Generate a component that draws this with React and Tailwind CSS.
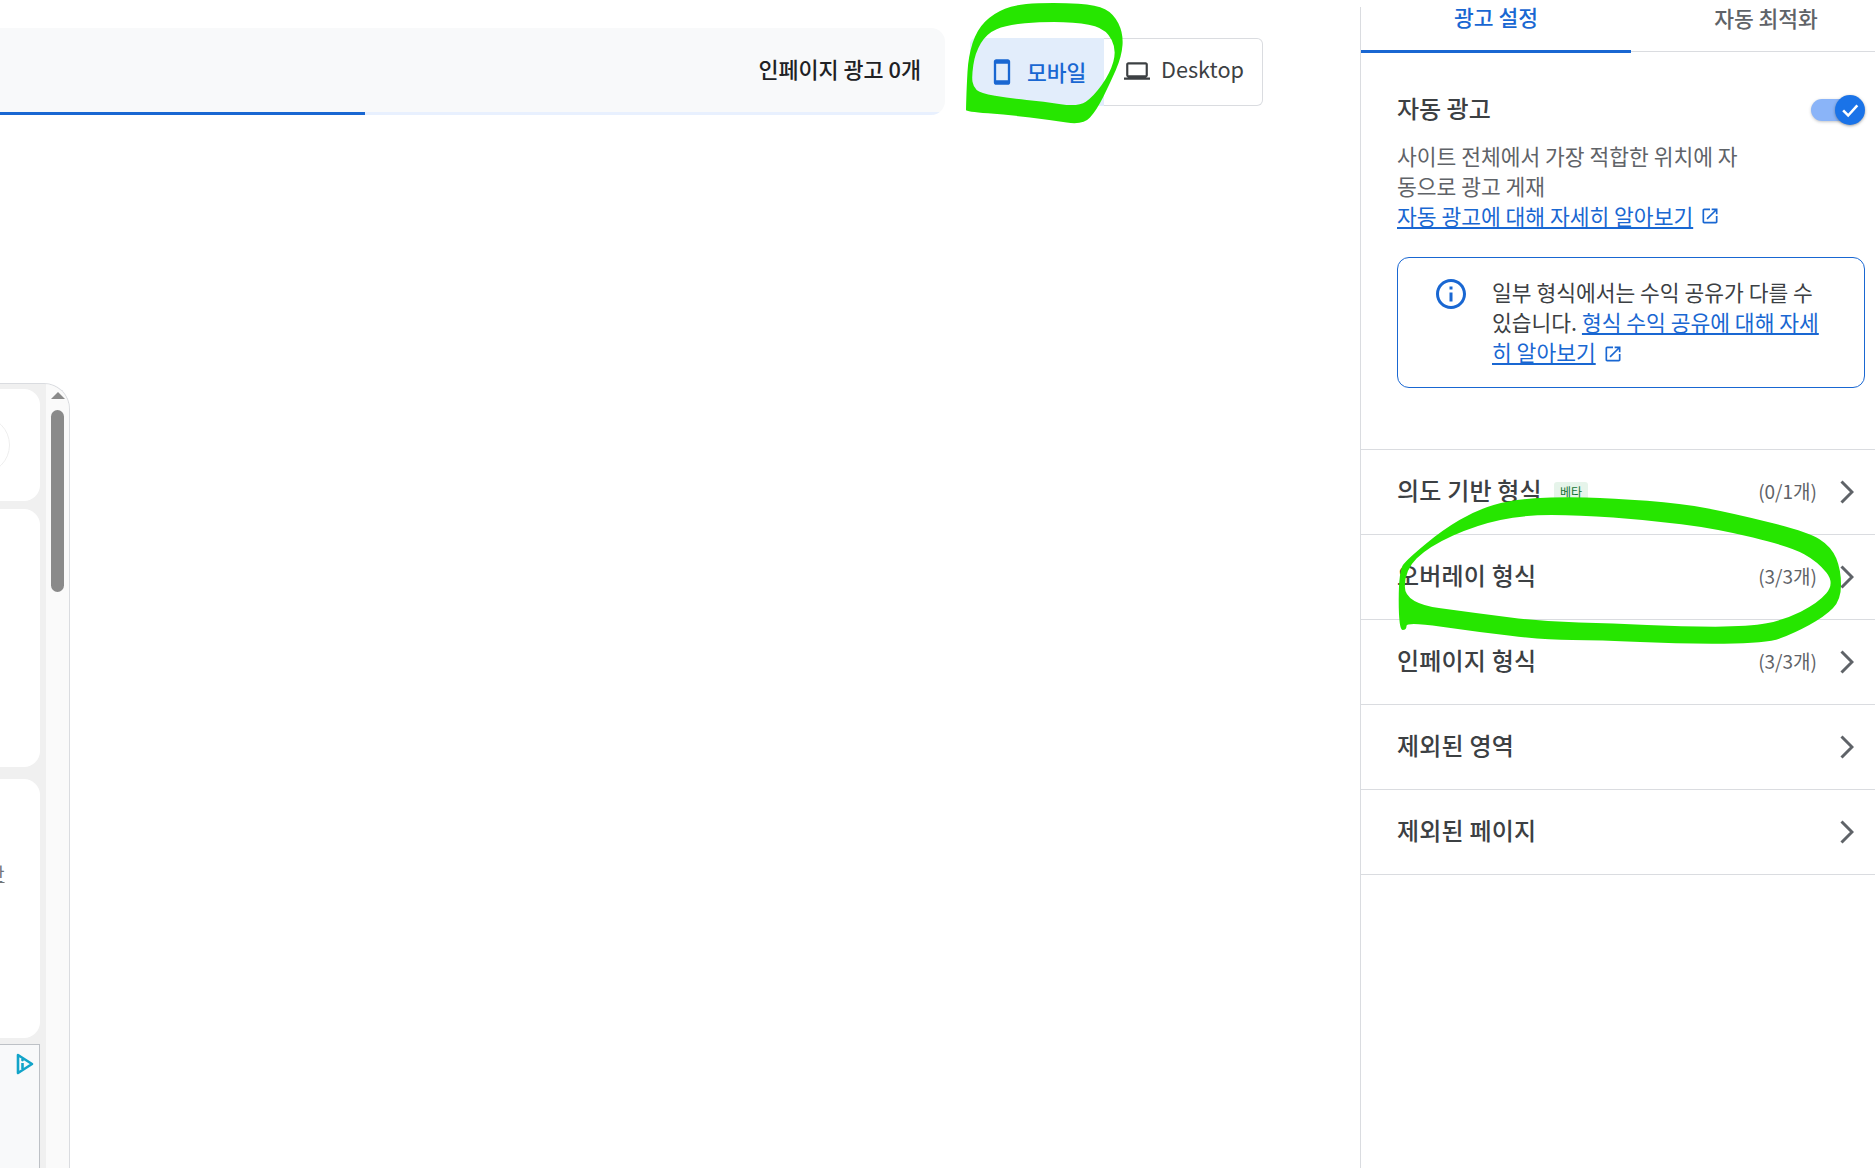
const FONT = "font-['Noto_Sans_CJK_KR','Noto_Sans',sans-serif]";

// closed freehand outline, smoothed through midpoints
function blob(points) {
  const mid = (a, b) => [(a[0] + b[0]) / 2, (a[1] + b[1]) / 2];
  const start = mid(points[points.length - 1], points[0]);
  let d = `M${start[0]} ${start[1]}`;
  points.forEach((p, i) => {
    const m = mid(p, points[(i + 1) % points.length]);
    d += ` Q${p[0]} ${p[1]} ${m[0]} ${m[1]}`;
  });
  return `${d} Z`;
}

const toTop = ([x, y]) => [950 + x / 3, y / 3];
const toRow = ([x, y]) => [1340 + x / 2.93, 430 + y / 3];

const markOne =
  blob([
    [48, 325], [50, 260], [55, 170], [80, 90], [130, 40], [200, 12], [330, 8], [440, 15], [490, 40],
    [520, 100], [515, 170], [480, 250], [440, 330], [400, 375], [300, 360], [180, 345], [48, 335],
  ].map(toTop)) +
  blob([
    [65, 230], [75, 160], [110, 100], [170, 75], [280, 65], [400, 68], [470, 90], [500, 150],
    [480, 220], [430, 290], [385, 320], [280, 305], [180, 295], [90, 280], [70, 260],
  ].map(toTop));

const markTwo =
  blob([
    [172, 600], [172, 420], [200, 385], [300, 300], [400, 240], [500, 210], [640, 200], [800, 205],
    [1000, 220], [1150, 250], [1370, 305], [1440, 350], [1468, 420], [1468, 510], [1420, 560],
    [1330, 610], [1250, 640], [1000, 642], [760, 630], [600, 630], [400, 605], [195, 575], [195, 600],
  ].map(toRow)) +
  blob([
    [190, 520], [190, 420], [260, 350], [400, 285], [540, 255], [700, 255], [900, 270], [1100, 295],
    [1320, 350], [1400, 395], [1450, 460], [1400, 520], [1300, 570], [1200, 590], [1000, 590],
    [800, 580], [600, 575], [400, 550],
  ].map(toRow));

function ExternalIcon({ className }) {
  return (
    <svg viewBox="0 0 24 24" fill="currentColor" className={className}>
      <path d="M19 19H5V5h7V3H5c-1.1 0-2 .9-2 2v14c0 1.1.9 2 2 2h14c1.1 0 2-.9 2-2v-7h-2v7zM14 3v2h3.59l-9.83 9.83 1.41 1.41L19 6.41V10h2V3h-7z" />
    </svg>
  );
}

function Row({ label, count, beta }) {
  return (
    <div className="h-[85px] shrink-0 flex items-center border-b border-[#dadce0] pl-[36px] pr-[21px]">
      <span className="-mt-[4px] text-[24px] font-medium text-[#3c4043] tracking-[0.2px]">{label}</span>
      {beta && (
        <span className="ml-[12px] px-[6px] h-[20px] flex items-center rounded-[3px] bg-[#e6f4ea] text-[12px] text-[#137333]">
          베타
        </span>
      )}
      <span className="ml-auto -mt-[2px] text-[19px] text-[#5f6368]">{count}</span>
      <svg viewBox="0 0 14 24" className="ml-[23px] w-[14px] h-[24px] text-[#5f6368]" fill="none" stroke="currentColor" strokeWidth="3">
        <path d="M1.5 1.5 12 12 1.5 22.5" />
      </svg>
    </div>
  );
}

function PhoneFrame() {
  return (
    <div className="mt-[268px] w-[70px] flex-1 flex overflow-hidden rounded-tr-[26px] border-t border-r border-[#dadce0] bg-[#f0f0f0]">
      <div className="w-[46px] shrink-0 pt-[5px] flex flex-col">
        <div className="w-[40px] h-[112px] rounded-r-[16px] bg-white flex items-center overflow-hidden">
          <div className="-ml-[48px] w-[58px] h-[58px] shrink-0 rounded-full border border-[#eeeeee]" />
        </div>
        <div className="mt-[8px] w-[40px] h-[258px] rounded-r-[16px] bg-white" />
        <div className="mt-[12px] w-[40px] h-[259px] rounded-r-[16px] bg-white flex items-center overflow-hidden">
          <span className="-ml-[12px] mt-[-70px] shrink-0 text-[18px] text-[#70757a] underline">만</span>
        </div>
        <div className="mt-[6px] w-[40px] flex-1 border-t border-r border-[#bdc1c6] bg-[#f8f9fa] flex justify-end items-start pt-[8px] pr-[5px]">
          <svg viewBox="0 0 18 22" className="w-[18px] h-[22px]" fill="none">
            <path d="M2 2 16 11 2 20Z" stroke="#12a4c9" strokeWidth="2.6" strokeLinejoin="round" />
            <path d="M6.5 10v6" stroke="#12a4c9" strokeWidth="2.6" />
            <circle cx="6.5" cy="7" r="1.4" fill="#12a4c9" />
          </svg>
        </div>
      </div>
      <div className="flex-1 bg-[#fafafa] flex flex-col items-center pt-[8px]">
        <div className="w-0 h-0 border-x-[7px] border-x-transparent border-b-[7px] border-b-[#8a8a8a]" />
        <div className="mt-[11px] w-[13px] h-[182px] rounded-full bg-[#8a8a8a]" />
      </div>
    </div>
  );
}

export default function App() {
  return (
    <div className={`relative w-[1875px] h-[1168px] flex overflow-hidden bg-white ${FONT}`}>
      <div className="w-[1360px] shrink-0 flex flex-col pt-[28px]">
        <div className="flex items-start">
          <div className="w-[945px] h-[87px] flex flex-col rounded-r-[14px] bg-[#f8f9fa] overflow-hidden">
            <div className="flex-1 flex items-center justify-end pr-[24px]">
              <span className="-mt-[2px] text-[21.8px] font-medium text-[#202124]">인페이지 광고 0개</span>
            </div>
            <div className="h-[3px] bg-[#e8f0fe]">
              <div className="w-[365px] h-full bg-[#1967d2]" />
            </div>
          </div>
          <div className="ml-[25px] mt-[10px] flex h-[68px]">
            <div className="w-[134px] flex items-center pl-[18px] bg-[#e2edfb] rounded-l-[6px] text-[#1967d2]">
              <svg viewBox="0 0 24 24" fill="currentColor" className="w-[28px] h-[28px]">
                <path d="M17 1.01 7 1c-1.1 0-2 .9-2 2v18c0 1.1.9 2 2 2h10c1.1 0 2-.9 2-2V3c0-1.1-.9-1.99-2-1.99zM17 19H7V5h10v14z" />
              </svg>
              <span className="ml-[11px] text-[21.5px] font-medium">모바일</span>
            </div>
            <div className="w-[159px] flex items-center pl-[20px] border border-l-0 border-[#dadce0] rounded-r-[6px] text-[#3c4043]">
              <svg viewBox="0 0 24 24" fill="currentColor" className="w-[26px] h-[26px] -mt-[2px]">
                <path d="M20 18c1.1 0 2-.9 2-2V6c0-1.1-.9-2-2-2H4c-1.1 0-2 .9-2 2v10c0 1.1.9 2 2 2H0v2h24v-2h-4zM4 6h16v10H4V6z" />
              </svg>
              <span className="ml-[11px] -mt-[5px] text-[21.7px]">Desktop</span>
            </div>
          </div>
        </div>
        <PhoneFrame />
      </div>

      <div className="mt-[7px] flex-1 min-w-0 flex flex-col border-l border-[#dadce0] overflow-hidden">
        <div className="h-[45px] shrink-0 flex border-b border-[#dadce0] text-[21.5px] leading-[19px] font-medium">
          <div className="w-[270px] shrink-0 -mb-[1px] h-[46px] pb-[24px] flex items-center justify-center border-b-[3px] border-[#1967d2] text-[#1967d2]">
            광고 설정
          </div>
          <div className="w-[270px] shrink-0 pb-[24px] flex items-center justify-center text-[#5f6368]">자동 최적화</div>
        </div>

        <div className="h-[398px] shrink-0 border-b border-[#dadce0] pl-[36px] pr-[10px] pt-[39px]">
          <div className="flex items-center justify-between h-[34px]">
            <span className="text-[24px] font-medium text-[#3c4043]">자동 광고</span>
            <div className="relative mt-[3px] mr-[4px] w-[50px] h-[22px] rounded-full bg-[#8ab4f8] shadow-[0_1px_3px_rgba(60,64,67,0.3)]">
              <div className="absolute -right-[4px] -top-[4px] w-[30px] h-[30px] rounded-full bg-[#1a73e8] flex items-center justify-center shadow-[0_1px_3px_rgba(60,64,67,0.5)]">
                <svg viewBox="0 0 24 24" className="w-[22px] h-[22px]" fill="none" stroke="white" strokeWidth="2.8">
                  <path d="M4.5 12.5 10 18 20 7" />
                </svg>
              </div>
            </div>
          </div>
          <div className="mt-[16px] w-[345px] text-[21.5px] leading-[30px] text-[#5f6368]">
            <p>사이트 전체에서 가장 적합한 위치에 자동으로 광고 게재</p>
            <p className="flex items-center text-[#1967d2]">
              <span className="underline">자동 광고에 대해 자세히 알아보기</span>
              <ExternalIcon className="ml-[7px] w-[20px] h-[20px]" />
            </p>
          </div>
          <div className="mt-[26px] h-[131px] rounded-[12px] border-[1.5px] border-[#1967d2] pl-[35px] pr-[40px] pt-[19px] flex">
            <svg viewBox="0 0 24 24" fill="#1967d2" className="w-[36px] h-[36px] shrink-0 mt-[-1px]">
              <path d="M11 7h2v2h-2zm0 4h2v6h-2zm1-9C6.48 2 2 6.48 2 12s4.48 10 10 10 10-4.48 10-10S17.52 2 12 2zm0 18c-4.41 0-8-3.59-8-8s3.59-8 8-8 8 3.59 8 8-3.59 8-8 8z" />
            </svg>
            <p className="ml-[23px] text-[21.5px] leading-[30px] text-[#3c4043]">
              일부 형식에서는 수익 공유가 다를 수 있습니다.{" "}
              <span className="text-[#1967d2] underline">형식 수익 공유에 대해 자세히 알아보기</span>
              <ExternalIcon className="inline ml-[7px] w-[20px] h-[20px] text-[#1967d2] align-[-3px]" />
            </p>
          </div>
        </div>

        <Row label="의도 기반 형식" count="(0/1개)" beta />
        <Row label="오버레이 형식" count="(3/3개)" />
        <Row label="인페이지 형식" count="(3/3개)" />
        <Row label="제외된 영역" />
        <Row label="제외된 페이지" />
      </div>

      <svg className="absolute inset-0 w-full h-full pointer-events-none" viewBox="0 0 1875 1168">
        <path d={markOne} fill="#26e600" fillRule="evenodd" />
        <path d={markTwo} fill="#26e600" fillRule="evenodd" />
      </svg>
    </div>
  );
}
